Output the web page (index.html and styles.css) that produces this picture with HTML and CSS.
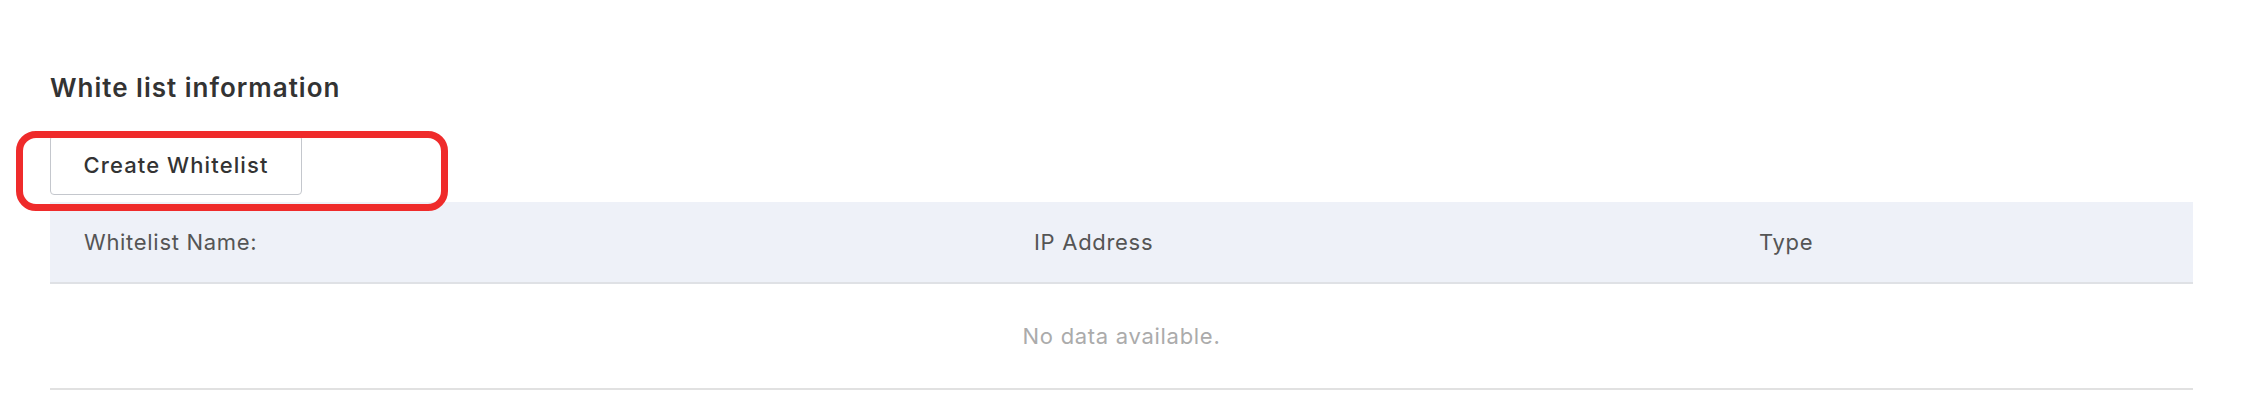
FILE: index.html
```html
<!DOCTYPE html>
<html lang="en">
<head>
<meta charset="utf-8">
<title>White list information</title>
<link rel="stylesheet" href="styles.css">
</head>
<body>
<main class="page">
  <h2 class="section-title">White list information</h2>
  <div class="toolbar">
    <div class="btn-wrap">
      <button class="btn" type="button">Create Whitelist</button>
      <span class="highlight"></span>
    </div>
  </div>
  <div class="table">
    <div class="thead">
      <div class="th">Whitelist Name:</div>
      <div class="th">IP Address</div>
      <div class="th">Type</div>
    </div>
    <div class="empty">No data available.</div>
  </div>
</main>
</body>
</html>
```

FILE: styles.css
```css
* { box-sizing: border-box; }
html, body { margin: 0; padding: 0; background: #ffffff; }
body {
  font-family: Inter, "Noto Sans", "Liberation Sans", sans-serif;
  color: #333;
}
.page {
  padding: 70px 57px 0 50px;
}
.section-title {
  margin: 0;
  font-size: 26px;
  line-height: 36px;
  font-weight: 600;
  letter-spacing: 1px;
  color: #333;
}
.toolbar {
  margin-top: 29px;
  display: flex;
}
.btn-wrap {
  position: relative;
}
.btn {
  display: block;
  width: 252px;
  height: 60px;
  background: #fff;
  border: 1px solid #c4c7cd;
  border-radius: 4px;
  font-family: inherit;
  font-size: 22px;
  font-weight: 500;
  letter-spacing: 1.1px;
  color: #333;
  padding: 0;
}
.highlight {
  position: absolute;
  left: -34px;
  top: -4px;
  width: 432px;
  height: 80px;
  border: 7px solid #ef2b2b;
  border-radius: 20px;
  pointer-events: none;
  z-index: 2;
}
.table {
  margin-top: 7px;
}
.thead {
  display: grid;
  grid-template-columns: 950px 725px 1fr;
  height: 82px;
  background: #eef1f8;
  border-bottom: 2px solid #dfe1e5;
  align-items: center;
}
.th {
  padding-left: 34px;
  font-size: 22px;
  letter-spacing: 0.7px;
  color: #555;
}
.empty {
  height: 106px;
  display: flex;
  align-items: center;
  justify-content: center;
  font-size: 22px;
  letter-spacing: 0.7px;
  color: #ababab;
  border-bottom: 2px solid #e1e1e1;
}
```
